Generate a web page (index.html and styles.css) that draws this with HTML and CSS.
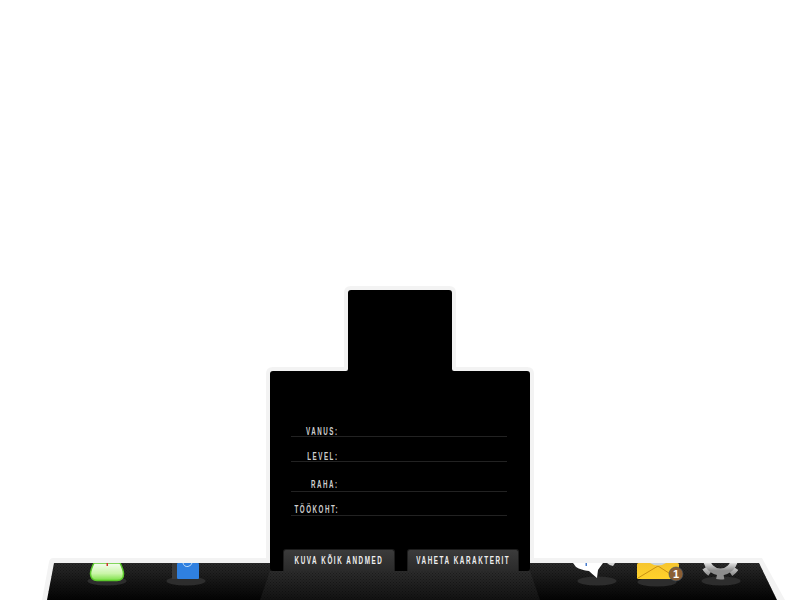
FILE: index.html
```html
<!DOCTYPE html>
<html lang="et">
<head>
<meta charset="utf-8">
<title>Profiil</title>
<link rel="stylesheet" href="styles.css">
</head>
<body>
<div class="stage">
  <svg class="dock" width="800" height="44" viewBox="0 556 800 44" aria-hidden="true">
    <defs>
      <linearGradient id="dockFade" x1="0" y1="0" x2="0" y2="1">
        <stop offset="0" stop-color="#2b2b2b"/>
        <stop offset="0.55" stop-color="#141414"/>
        <stop offset="1" stop-color="#030303"/>
      </linearGradient>
      <linearGradient id="midFade" x1="0" y1="0" x2="0" y2="1">
        <stop offset="0" stop-color="#2c2c2c"/>
        <stop offset="1" stop-color="#121212"/>
      </linearGradient>
      <pattern id="mesh" width="3" height="3" patternUnits="userSpaceOnUse">
        <rect x="0" y="0" width="1" height="1" fill="#000" fill-opacity="0.35"/>
        <rect x="1.5" y="1.5" width="1" height="1" fill="#000" fill-opacity="0.35"/>
      </pattern>
      <linearGradient id="green" x1="0" y1="0" x2="0" y2="1">
        <stop offset="0" stop-color="#f6fdf2"/>
        <stop offset="0.6" stop-color="#c9f5a8"/>
        <stop offset="1" stop-color="#7be045"/>
      </linearGradient>
      <linearGradient id="yellow" x1="0" y1="0" x2="0" y2="1">
        <stop offset="0" stop-color="#f7c52f"/>
        <stop offset="1" stop-color="#ffd22a"/>
      </linearGradient>
      <linearGradient id="steel" x1="0" y1="0" x2="0" y2="1">
        <stop offset="0.62" stop-color="#f6f6f6"/>
        <stop offset="0.95" stop-color="#8c8c8c"/>
      </linearGradient>
      <clipPath id="dockClip"><path d="M54 563H759L777 600H47Z"/></clipPath>
    </defs>
    <path d="M53 558H762L785 600H42L49 562Q50 558 53 558Z" fill="#f3f3f3"/>
    <path d="M54 563H759L777 600H47Z" fill="url(#dockFade)"/>
    <path d="M54 563H759L777 600H47Z" fill="url(#mesh)"/>
    <path d="M270 571H530L540 600H260Z" fill="url(#midFade)"/>
    <path d="M270 571H530L540 600H260Z" fill="url(#mesh)"/>
    <g clip-path="url(#dockClip)">
      <ellipse cx="107" cy="581" rx="19.500" ry="4.500" fill="#2d2d2d"/>
      <path d="M94 563Q90.500 570 90.500 574Q91 580.500 97 580.500H117Q123.500 580.500 123.500 574Q123.500 570 120 563Z" fill="url(#green)" stroke="#5cc92c" stroke-width="1.500"/>
      <rect x="106.500" y="563" width="1.500" height="3" fill="#d0342c"/>

      <ellipse cx="186" cy="581" rx="19.500" ry="4.500" fill="#2d2d2d"/>
      <rect x="172" y="563" width="5" height="16" fill="#3a3a3a"/>
      <rect x="177" y="563" width="22" height="16" rx="1" fill="#2f80e0"/>
      <path d="M183 563Q184 567 188 566.500Q191 566 192 563" fill="none" stroke="#bcd9f7" stroke-width="1"/>

      <ellipse cx="597" cy="581" rx="19.500" ry="4.500" fill="#2d2d2d"/>
      <path d="M573 563H603Q600 567 598 570L597 578Q592 574 589 571Q581 570 576 567Z" fill="#fff"/>
      <path d="M607 563H615L613 566Q610 566 607 563Z" fill="#d8d8d8"/>
      <rect x="585.500" y="563" width="1.500" height="3" fill="#4a7fd0"/>

      <ellipse cx="657" cy="582" rx="19.500" ry="4.500" fill="#2d2d2d"/>
      <rect x="637" y="563" width="42" height="16" rx="1.500" fill="url(#yellow)"/>
      <path d="M638 578L658 566L675 577" fill="none" stroke="#c98f12" stroke-width="1"/>
      <path d="M650 563Q658 568 666 563Z" fill="#c9d3dc"/>
      <circle cx="676" cy="574" r="7" fill="#8b5e34" stroke="#34506a" stroke-width="0.600"/>
      <text class="badge" x="676" y="578" text-anchor="middle">1</text>

      <ellipse cx="721" cy="581" rx="19.500" ry="4.500" fill="#2d2d2d"/>
      <circle cx="720.500" cy="558" r="19" fill="none" stroke="url(#steel)" stroke-width="5" stroke-dasharray="7.500 7.420" stroke-dashoffset="3.700"/>
      <circle cx="720.500" cy="558" r="14" fill="none" stroke="url(#steel)" stroke-width="7"/>
    </g>
  </svg>

  <main class="panel">
    <svg class="panel-shape" width="272" height="293" viewBox="264 284 272 293" aria-hidden="true">
      <defs>
        <clipPath id="aboveDock"><rect x="264" y="284" width="272" height="279"/></clipPath>
      </defs>
      <path clip-path="url(#aboveDock)" d="M351 290H449Q452 290 452 293V369Q452 371 454 371H527Q530 371 530 374V568Q530 571 527 571H273Q270 571 270 568V374Q270 371 273 371H346Q348 371 348 369V293Q348 290 351 290Z" fill="none" stroke="#f3f3f3" stroke-width="8"/>
      <path d="M351 290H449Q452 290 452 293V369Q452 371 454 371H527Q530 371 530 374V568Q530 571 527 571H273Q270 571 270 568V374Q270 371 273 371H346Q348 371 348 369V293Q348 290 351 290Z" fill="#000"/>
    </svg>
    <div class="panel-body">
      <dl class="stats">
        <div class="row row-vanus"><dt class="label"><span class="narrow">VANUS:</span></dt><dd class="value"></dd></div>
        <div class="row row-level"><dt class="label"><span class="narrow">LEVEL:</span></dt><dd class="value"></dd></div>
        <div class="row row-raha"><dt class="label"><span class="narrow">RAHA:</span></dt><dd class="value"></dd></div>
        <div class="row row-too"><dt class="label"><span class="narrow">TÖÖKOHT:</span></dt><dd class="value"></dd></div>
      </dl>
      <div class="actions">
        <button class="btn" type="button"><span class="narrow narrow-mid">KUVA KÕIK ANDMED</span></button>
        <button class="btn" type="button"><span class="narrow narrow-mid">VAHETA KARAKTERIT</span></button>
      </div>
    </div>
  </main>
</div>
</body>
</html>
```
FILE: styles.css
```css
* {
  box-sizing: border-box;
}

html,
body {
  margin: 0;
  padding: 0;
  background: #fff;
  overflow: hidden;
}

.stage {
  display: grid;
  width: 800px;
  height: 600px;
}

.dock {
  grid-area: 1 / 1;
  align-self: end;
  display: block;
}

.panel {
  grid-area: 1 / 1;
  align-self: end;
  justify-self: center;
  display: grid;
  width: 272px;
  height: 293px;
  margin-bottom: 23px;
}

.panel-shape {
  grid-area: 1 / 1;
  display: block;
}

.panel-body {
  grid-area: 1 / 1;
  display: flex;
  flex-direction: column;
  justify-content: flex-end;
  padding: 0 16px 6px 27px;
  font-family: "Liberation Sans", sans-serif;
  font-weight: 700;
}

.stats {
  display: flex;
  flex-direction: column;
  margin: 0 0 33px;
  padding: 0;
}

.row {
  display: flex;
  align-items: flex-end;
  width: 216px;
  border-bottom: 1px solid #222;
}

.row-vanus {
  height: 14px;
  margin-bottom: 11px;
}

.row-level {
  height: 14px;
  margin-bottom: 15px;
}

.row-raha {
  height: 15px;
  margin-bottom: 10px;
}

.row-too {
  height: 14px;
}

.label {
  display: flex;
  justify-content: flex-end;
  width: 48px;
  font-size: 10px;
  line-height: 12px;
  letter-spacing: 2.5px;
  color: #cfcfcf;
  white-space: nowrap;
}

.row-vanus .label,
.row-level .label {
  margin-bottom: -2px;
}

.row-too .label {
  margin-bottom: -1px;
}

.narrow {
  display: inline-block;
  transform: scaleX(0.62);
  transform-origin: right center;
}

.narrow-mid {
  transform: scaleX(0.6);
  transform-origin: center;
}

.value {
  flex: 1;
  margin: 0;
}

.actions {
  display: flex;
  gap: 12px;
  margin-left: -8px;
}

.btn {
  display: flex;
  justify-content: center;
  width: 112px;
  height: 22px;
  padding: 0;
  border: 1px solid #1d1d1d;
  border-bottom: 0;
  border-radius: 3px 3px 0 0;
  background: linear-gradient(#3b3b3b, #2a2a2a);
  color: #f0f0f0;
  font: inherit;
  font-size: 10.500px;
  line-height: 20px;
  letter-spacing: 2.6px;
  white-space: nowrap;
}

.badge {
  font-family: "Liberation Sans", sans-serif;
  font-size: 11px;
  font-weight: 700;
  fill: #fff;
}
```
